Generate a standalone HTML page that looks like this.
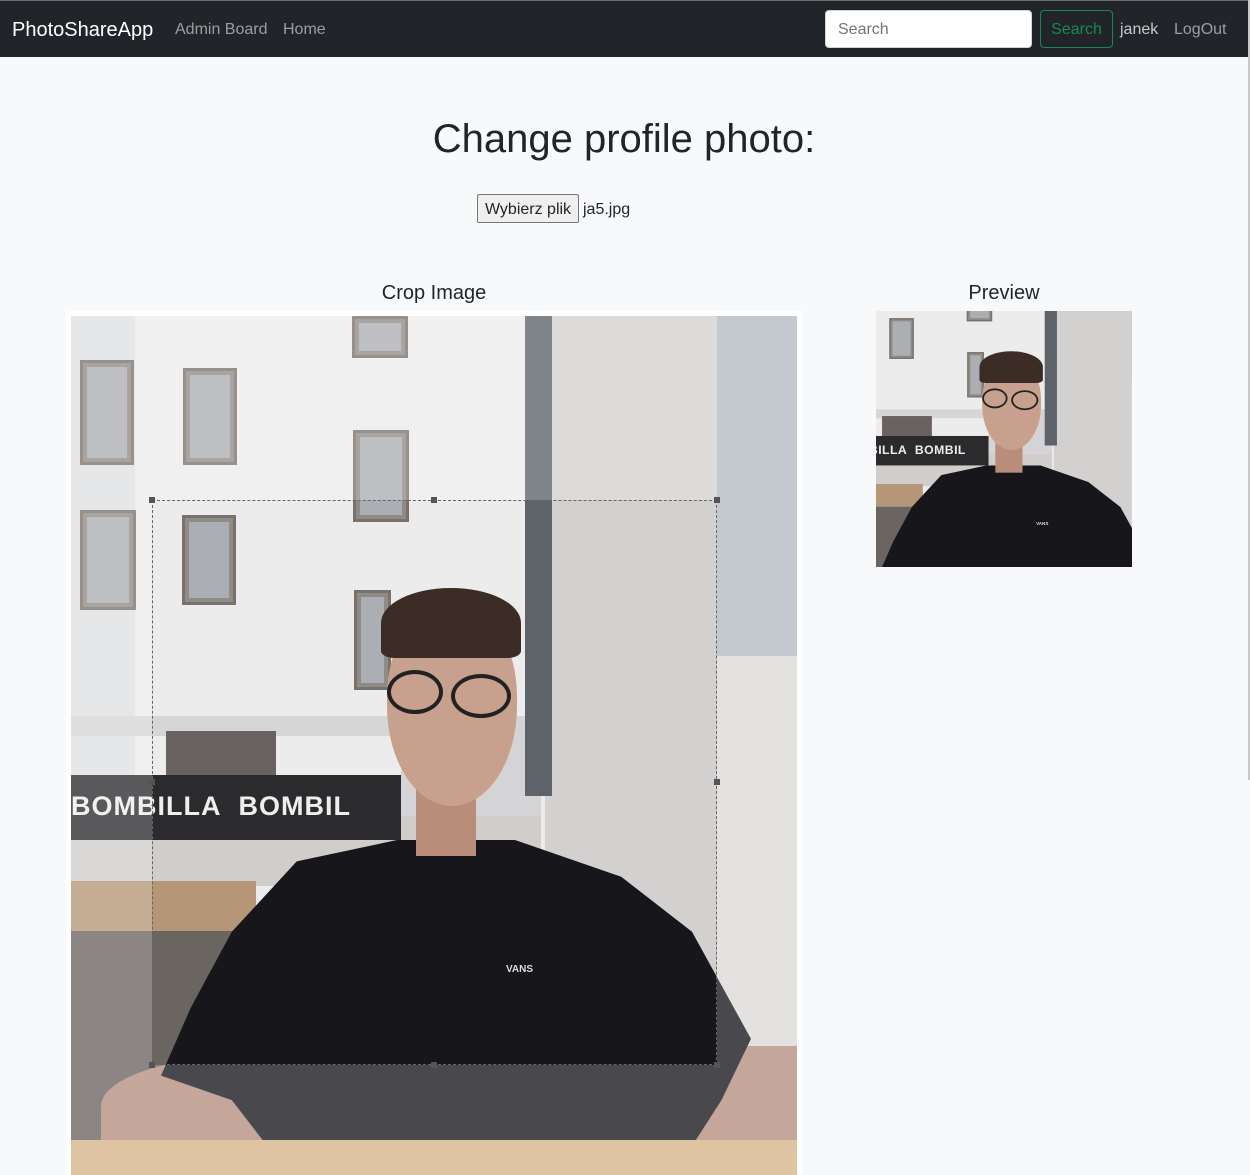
<!DOCTYPE html>
<html><head><meta charset="utf-8"><style>
*{box-sizing:border-box;margin:0;padding:0}
body{width:1250px;height:1175px;overflow:hidden;background:#f8f9fa;font-family:"Liberation Sans",sans-serif;color:#212529;position:relative}
.nav{position:absolute;left:0;top:0;width:1248px;height:57px;background:#212529;border-top:1px solid #6c6c6c}
.nav span{position:absolute;top:20px;font-size:16px;color:rgba(255,255,255,.55)}
.sb{position:absolute;right:0;top:0;width:2px;height:780px;background:#c8c8c8}
.photo{position:absolute;width:726px;height:859px;overflow:hidden;background:#ececec}
.photo div{position:absolute}
.win{background:#8f8b87;border:3px solid #7a716b}
.win::after{content:"";position:absolute;left:4px;top:4px;right:4px;bottom:4px;background:#b7bdc6;opacity:.7}
.h{width:6px;height:6px;background:#555;position:absolute}
</style></head><body>
<div class="nav">
<span style="left:12px;top:18px;font-size:20px;color:#fff">PhotoShareApp</span>
<span style="left:175px">Admin Board</span>
<span style="left:283px">Home</span>
<div style="position:absolute;left:825px;top:9px;width:207px;height:38px;background:#fff;border-radius:4px;border:1px solid #ced4da;color:#6c757d;font-size:16px;padding:10px 12px">Search</div>
<div style="position:absolute;left:1040px;top:9px;width:73px;height:38px;border:1px solid #198754;border-radius:4px;color:#198754;font-size:16px;padding:10px 0;text-align:center">Search</div>
<span style="left:1120px;color:rgba(255,255,255,.75)">janek</span>
<span style="left:1174px">LogOut</span>
</div>
<div class="sb"></div>
<div style="position:absolute;left:0;width:1248px;top:117px;text-align:center;font-size:40px;font-weight:500">Change profile photo:</div>
<div style="position:absolute;left:477px;top:194px;width:102px;height:29px;background:#efefef;border:1px solid #767676;border-radius:2px;font-size:16px;text-align:center;padding-top:6px">Wybierz plik</div>
<div style="position:absolute;left:583px;top:201px;font-size:16px">ja5.jpg</div>
<div style="position:absolute;left:66px;width:736px;top:282px;text-align:center;font-size:20px;font-weight:500">Crop Image</div>
<div style="position:absolute;left:876px;width:256px;top:282px;text-align:center;font-size:20px;font-weight:500">Preview</div>
<div style="position:absolute;left:66px;top:311px;width:736px;height:864px;background:#fff"></div>

<div class="photo" style="left:71px;top:316px">
<div style="left:0;top:0;width:64px;height:500px;background:#dfe0e2"></div>
<div class="win" style="left:9px;top:44px;width:54px;height:105px"></div>
<div class="win" style="left:112px;top:52px;width:54px;height:97px"></div>
<div class="win" style="left:281px;top:0;width:56px;height:42px"></div>
<div class="win" style="left:282px;top:114px;width:56px;height:92px"></div>
<div class="win" style="left:9px;top:194px;width:56px;height:100px"></div>
<div class="win" style="left:111px;top:199px;width:54px;height:90px"></div>
<div class="win" style="left:283px;top:274px;width:37px;height:100px"></div>
<div style="left:0;top:400px;width:470px;height:20px;background:#d6d6d6"></div>
<div style="left:95px;top:415px;width:110px;height:150px;background:#6a6260"></div>
<div style="left:330px;top:400px;width:140px;height:160px;background:#d4d4d6"></div>
<div style="left:474px;top:0;width:172px;height:859px;background:#d3d1d0"></div>
<div style="left:646px;top:0;width:80px;height:340px;background:#b4b9c2"></div>
<div style="left:646px;top:340px;width:80px;height:519px;background:#dcdad9"></div>
<div style="left:454px;top:0;width:27px;height:480px;background:#5d6369"></div>
<div style="left:0;top:500px;width:470px;height:70px;background:#d0cdcb"></div>
<div style="left:0;top:459px;width:330px;height:65px;background:#2b2a2c;color:#eee;font-weight:bold;font-size:27px;padding-top:16px;letter-spacing:1px;white-space:nowrap;overflow:hidden">BOMBILLA&nbsp;&nbsp;BOMBIL</div>
<div style="left:0;top:565px;width:185px;height:50px;background:#b59676"></div>
<div style="left:0;top:615px;width:200px;height:215px;background:#6b6562"></div>
<div style="left:30px;top:740px;width:300px;height:100px;background:#b58e7f;border-radius:50% 50% 0 0"></div>
<div style="left:560px;top:730px;width:166px;height:100px;background:#b58e7f;border-radius:50% 0 0 0"></div>
<div style="left:90px;top:524px;width:590px;height:306px;background:#17161b;clip-path:polygon(23% 7%,40% 0,60% 0,78% 12%,90% 30%,100% 65%,95% 85%,90% 100%,18% 100%,12% 85%,0 77%,5% 55%,12% 30%)"></div>
<div style="left:345px;top:450px;width:60px;height:90px;background:#b88d7a"></div>
<div style="left:316px;top:290px;width:130px;height:200px;background:#c8a08e;border-radius:45% 45% 50% 50%"></div>
<div style="left:310px;top:272px;width:140px;height:70px;background:#3b2c25;border-radius:50% 50% 10% 10%"></div>
<div style="left:316px;top:354px;width:56px;height:44px;border:4px solid #222;border-radius:50%"></div>
<div style="left:380px;top:358px;width:60px;height:44px;border:4px solid #222;border-radius:50%"></div>
<div style="left:435px;top:648px;color:#ddd;font-size:10px;font-weight:bold">VANS</div>
<div style="left:0;top:824px;width:726px;height:35px;background:#d6b48b"></div>
<div style="left:81px;top:184px;width:565px;height:565px;border:1px dashed #666;box-shadow:0 0 0 1200px rgba(255,255,255,.22)"></div>
<div class="h" style="left:78px;top:181px"></div><div class="h" style="left:360px;top:181px"></div><div class="h" style="left:643px;top:181px"></div>
<div class="h" style="left:78px;top:463px"></div><div class="h" style="left:643px;top:463px"></div>
<div class="h" style="left:78px;top:746px"></div><div class="h" style="left:360px;top:746px"></div><div class="h" style="left:643px;top:746px"></div>
</div>

<div style="position:absolute;left:876px;top:311px;width:256px;height:256px;overflow:hidden">
<div class="photo" style="left:-36.7px;top:-83.4px;transform:scale(.4531);transform-origin:0 0">
<div style="left:0;top:0;width:64px;height:500px;background:#dfe0e2"></div>
<div class="win" style="left:9px;top:44px;width:54px;height:105px"></div>
<div class="win" style="left:112px;top:52px;width:54px;height:97px"></div>
<div class="win" style="left:281px;top:0;width:56px;height:42px"></div>
<div class="win" style="left:282px;top:114px;width:56px;height:92px"></div>
<div class="win" style="left:9px;top:194px;width:56px;height:100px"></div>
<div class="win" style="left:111px;top:199px;width:54px;height:90px"></div>
<div class="win" style="left:283px;top:274px;width:37px;height:100px"></div>
<div style="left:0;top:400px;width:470px;height:20px;background:#d6d6d6"></div>
<div style="left:95px;top:415px;width:110px;height:150px;background:#6a6260"></div>
<div style="left:330px;top:400px;width:140px;height:160px;background:#d4d4d6"></div>
<div style="left:474px;top:0;width:172px;height:859px;background:#d3d1d0"></div>
<div style="left:646px;top:0;width:80px;height:340px;background:#b4b9c2"></div>
<div style="left:646px;top:340px;width:80px;height:519px;background:#dcdad9"></div>
<div style="left:454px;top:0;width:27px;height:480px;background:#5d6369"></div>
<div style="left:0;top:500px;width:470px;height:70px;background:#d0cdcb"></div>
<div style="left:0;top:459px;width:330px;height:65px;background:#2b2a2c;color:#eee;font-weight:bold;font-size:27px;padding-top:16px;letter-spacing:1px;white-space:nowrap;overflow:hidden">BOMBILLA&nbsp;&nbsp;BOMBIL</div>
<div style="left:0;top:565px;width:185px;height:50px;background:#b59676"></div>
<div style="left:0;top:615px;width:200px;height:215px;background:#6b6562"></div>
<div style="left:30px;top:740px;width:300px;height:100px;background:#b58e7f;border-radius:50% 50% 0 0"></div>
<div style="left:560px;top:730px;width:166px;height:100px;background:#b58e7f;border-radius:50% 0 0 0"></div>
<div style="left:90px;top:524px;width:590px;height:306px;background:#17161b;clip-path:polygon(23% 7%,40% 0,60% 0,78% 12%,90% 30%,100% 65%,95% 85%,90% 100%,18% 100%,12% 85%,0 77%,5% 55%,12% 30%)"></div>
<div style="left:345px;top:450px;width:60px;height:90px;background:#b88d7a"></div>
<div style="left:316px;top:290px;width:130px;height:200px;background:#c8a08e;border-radius:45% 45% 50% 50%"></div>
<div style="left:310px;top:272px;width:140px;height:70px;background:#3b2c25;border-radius:50% 50% 10% 10%"></div>
<div style="left:316px;top:354px;width:56px;height:44px;border:4px solid #222;border-radius:50%"></div>
<div style="left:380px;top:358px;width:60px;height:44px;border:4px solid #222;border-radius:50%"></div>
<div style="left:435px;top:648px;color:#ddd;font-size:10px;font-weight:bold">VANS</div>
<div style="left:0;top:824px;width:726px;height:35px;background:#d6b48b"></div>
</div>
</div>
</body></html>
